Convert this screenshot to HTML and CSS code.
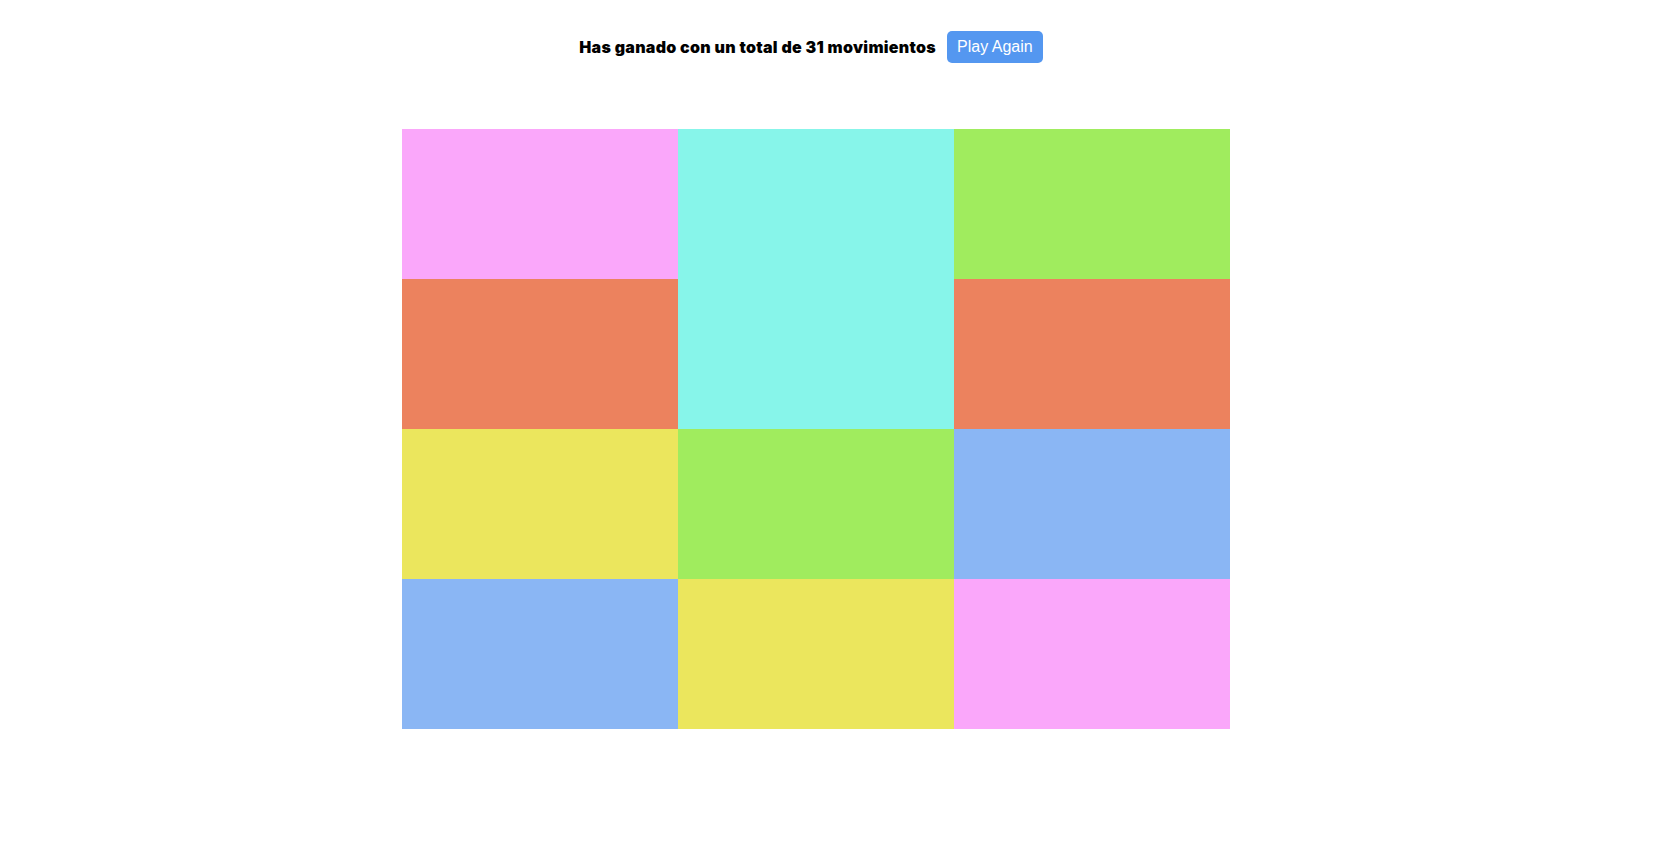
FILE: index.html
```html
<!DOCTYPE html>
<html lang="es">
<head>
<meta charset="utf-8">
<title>Memory</title>
<link rel="stylesheet" href="styles.css">
</head>
<body>
<div class="page">
  <div class="header">
    <span class="status">Has ganado con un total de 31 movimientos</span>
    <button class="btn">Play Again</button>
  </div>
  <div class="board">
    <div class="cell pink"></div>
    <div class="cell cyan tall"></div>
    <div class="cell green"></div>
    <div class="cell orange"></div>
    <div class="cell orange"></div>
    <div class="cell yellow"></div>
    <div class="cell green"></div>
    <div class="cell blue"></div>
    <div class="cell blue"></div>
    <div class="cell yellow"></div>
    <div class="cell pink"></div>
  </div>
</div>
</body>
</html>
```
FILE: styles.css
```css
html, body {
  margin: 0;
  padding: 0;
  background: #ffffff;
}
.page {
  width: 1632px;
  display: flex;
  flex-direction: column;
  align-items: center;
}
.header {
  margin-top: 31px;
  margin-right: 10px;
  height: 32px;
  display: flex;
  align-items: center;
  gap: 11px;
}
.status {
  font-family: Inter, "Noto Sans", sans-serif;
  font-weight: 900;
  font-size: 16px;
  color: #000;
  letter-spacing: 0.3px;
}
.btn {
  height: 32px;
  padding: 0 10px;
  border: none;
  border-radius: 5px;
  background: #5497f0;
  color: #fff;
  font-family: "Liberation Sans", Arial, sans-serif;
  font-size: 16px;
  cursor: pointer;
}
.board {
  margin-top: 66px;
  display: grid;
  grid-template-columns: repeat(3, 276px);
  grid-template-rows: repeat(4, 150px);
}
.tall { grid-row: span 2; }
.pink { background: #faa7fa; }
.cyan { background: #87f5ea; }
.green { background: #a0ec5e; }
.orange { background: #ec825e; }
.yellow { background: #ebe65d; }
.blue { background: #8ab6f4; }
```
